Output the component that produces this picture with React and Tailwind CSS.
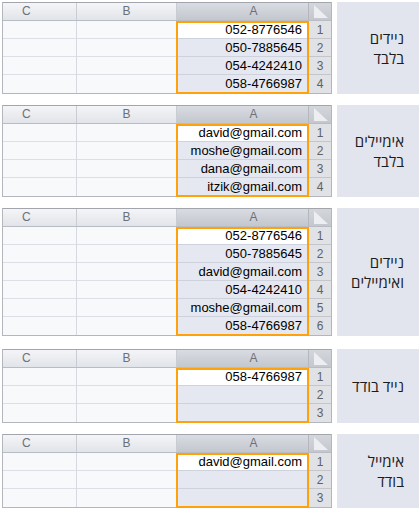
import React from "react";

const font = { fontFamily: '"Liberation Sans", "DejaVu Sans", Arial, sans-serif' };
const hebrew = { fontFamily: '"Open Sans", "Liberation Sans", "DejaVu Sans", sans-serif' };

const blocks = [
  {
    space: "mt-[2px]",
    rows: ["052-8776546", "050-7885645", "054-4242410", "058-4766987"],
    label: ["ניידים", "בלבד"],
  },
  {
    space: "mt-[11px]",
    rows: ["david@gmail.com", "moshe@gmail.com", "dana@gmail.com", "itzik@gmail.com"],
    label: ["אימיילים", "בלבד"],
  },
  {
    space: "mt-[11px]",
    rows: [
      "052-8776546",
      "050-7885645",
      "david@gmail.com",
      "054-4242410",
      "moshe@gmail.com",
      "058-4766987",
    ],
    label: ["ניידים", "ואימיילים"],
  },
  {
    space: "mt-[13px]",
    rows: ["058-4766987", "", ""],
    label: ["נייד בודד"],
  },
  {
    space: "mt-[11px]",
    rows: ["david@gmail.com", "", ""],
    label: ["אימייל", "בודד"],
  },
];

function Sheet({ rows }) {
  return (
    <div className="w-[330px] border-x border-b border-[#b3b7bd] flex flex-col">
      {/* column headers */}
      <div className="flex h-[19px] border-t border-[#a2a6ac] border-b border-b-[#b9bdc3] text-[12px] text-[#6d7177]">
        <div className="w-[74px] border-r border-[#c9ccd2] bg-gradient-to-b from-[#f4f5f8] to-[#e1e4e9] pl-[19px] leading-[17px]">
          C
        </div>
        <div className="w-[100px] border-r border-[#c9ccd2] bg-gradient-to-b from-[#f4f5f8] to-[#e1e4e9] text-center leading-[17px]">
          B
        </div>
        <div className="w-[132px] border-r border-[#b4b8be] bg-gradient-to-b from-[#d9dce2] to-[#c3c7ce] pl-[22px] text-center leading-[17px]">
          A
        </div>
        <div className="w-[22px] bg-gradient-to-b from-[#d3d6db] to-[#c4c7cd] flex items-end justify-end pr-[3px] pb-[2px]">
          <svg width="14" height="13" viewBox="0 0 14 13">
            <polygon points="0,0 0,13 14,13" fill="#eceef1" />
          </svg>
        </div>
      </div>

      {/* cells */}
      <div className="relative flex">
        <div className="w-[74px] border-r border-[#d6d9df] flex flex-col">
          {rows.map((_, i) => (
            <div key={i} className="h-[18px] bg-[#f8f9fb] border-b border-[#dcdfe5] last:border-b-0" />
          ))}
        </div>
        <div className="w-[100px] border-r border-[#d6d9df] flex flex-col">
          {rows.map((_, i) => (
            <div key={i} className="h-[18px] bg-[#f8f9fb] border-b border-[#dcdfe5] last:border-b-0" />
          ))}
        </div>
        <div className="w-[132px] border-r border-[#b4b8be] flex flex-col">
          {rows.map((r, i) => (
            <div
              key={i}
              className={`h-[18px] border-b border-[#cdd2dc] last:border-b-0 text-right pr-[6px] text-[13px] leading-[18px] text-black ${
                i === 0 ? "bg-white" : "bg-[#e5e8f0]"
              }`}
            >
              {r}
            </div>
          ))}
        </div>
        <div className="w-[22px] flex flex-col bg-[#e0e2e6]">
          {rows.map((_, i) => (
            <div
              key={i}
              className="h-[18px] border-b border-[#c3c6cc] last:border-b-0 text-center text-[12px] leading-[18px] text-[#5e6166]"
            >
              {i + 1}
            </div>
          ))}
        </div>
        {/* selection outline */}
        <div className="absolute top-0 bottom-[-1px] left-[173px] w-[133px] border-2 border-[#ffa10a]" />
      </div>
    </div>
  );
}

export default function App() {
  return (
    <div className="w-[419px] h-[513px] bg-white pl-[2px] overflow-hidden" style={font}>
      {blocks.map((b, i) => (
        <div key={i} className={`flex ${b.space}`}>
          <Sheet rows={b.rows} />
          <div
            dir="rtl"
            style={hebrew}
            className="ml-[5px] flex-1 bg-[#e2e5ee] flex flex-col justify-center pr-[15px] text-[15px] leading-[20px] text-[#1c1c1c]"
          >
            {b.label.map((t, j) => (
              <div key={j}>{t}</div>
            ))}
          </div>
        </div>
      ))}
    </div>
  );
}
